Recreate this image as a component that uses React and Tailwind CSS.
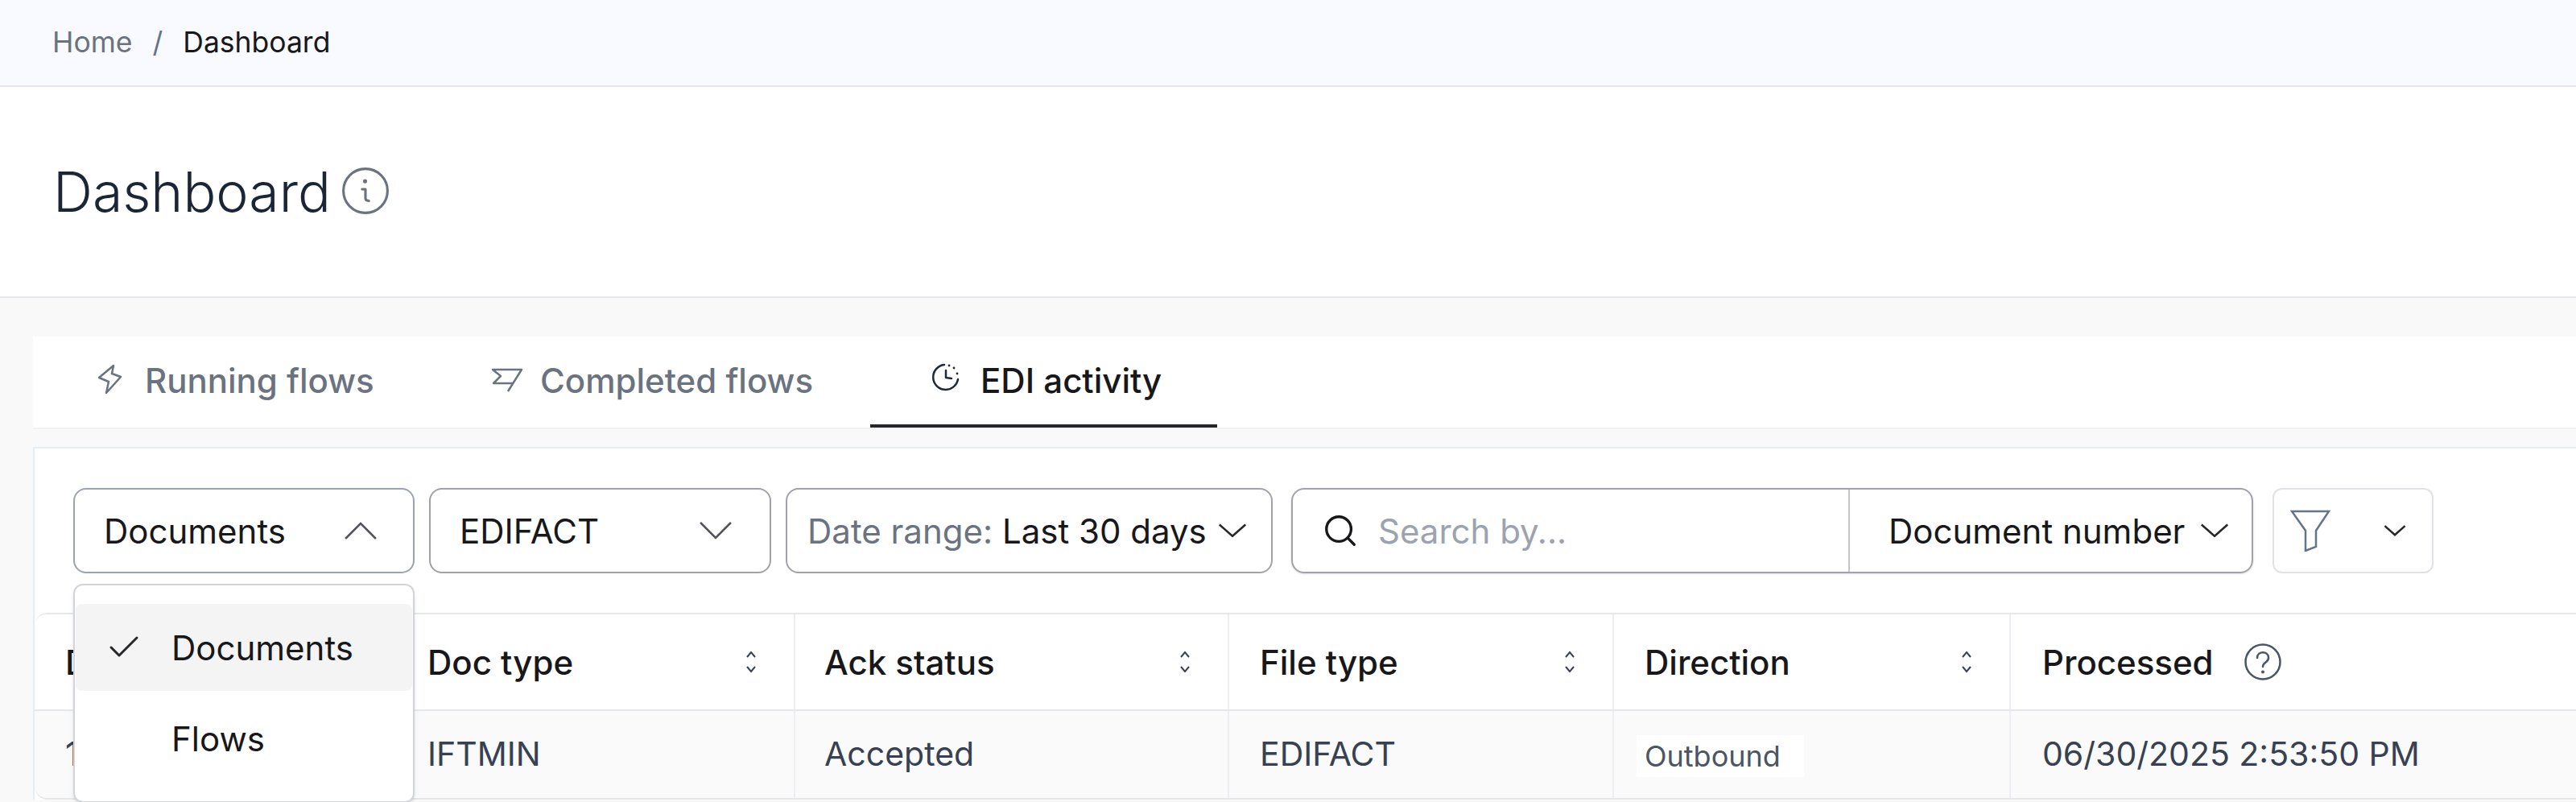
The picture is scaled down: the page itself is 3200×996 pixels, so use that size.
import { Search, Check } from "lucide-react";

const COLUMNS = [
  { label: "Document", value: "123456789", width: "w-[452px]", pad: "pl-[38px]" },
  { label: "Doc type", value: "IFTMIN", width: "w-[493px]", pad: "pl-[36px]" },
  { label: "Ack status", value: "Accepted", width: "w-[539px]", pad: "pl-[36px]" },
  { label: "File type", value: "EDIFACT", width: "w-[478px]", pad: "pl-[38px]" },
  { label: "Direction", value: "Outbound", width: "w-[493px]", pad: "pl-[38px]", badge: true },
];

function Chevron({ up, className }) {
  return (
    <svg viewBox="0 0 40 24" fill="none" preserveAspectRatio="none" className={className}>
      <polyline
        points={up ? "2,22 20,3 38,22" : "2,2 20,21 38,2"}
        stroke="currentColor"
        strokeWidth="2.5"
        vectorEffect="non-scaling-stroke"
      />
    </svg>
  );
}

function SortIcon() {
  return (
    <svg viewBox="0 0 16 30" fill="none" className="w-[16px] h-[30px] text-[#374151]">
      <polyline points="3,9 8,3 13,9" stroke="currentColor" strokeWidth="2" />
      <polyline points="3,21 8,27 13,21" stroke="currentColor" strokeWidth="2" />
    </svg>
  );
}

function BoltIcon() {
  return (
    <svg viewBox="0 0 70 70" fill="none" className="w-[70px] h-[70px] -mt-[14px] text-[#6b7280]">
      <path d="M41 23 L23 38 L35 43 L32 57 L50 37 L39 33 Z" stroke="currentColor" strokeWidth="2.5" strokeLinejoin="round" />
    </svg>
  );
}

function FlagIcon() {
  return (
    <svg viewBox="0 0 70 70" fill="none" className="w-[70px] h-[70px] -mt-[14px] text-[#6b7280]">
      <path d="M36 55 L53 28 L17 28 L27 36 L18 45 L43 45" stroke="currentColor" strokeWidth="2.5" strokeLinejoin="round" />
    </svg>
  );
}

function ClockIcon() {
  return (
    <svg viewBox="0 0 70 70" fill="none" className="w-[70px] h-[70px] -mt-[14px] text-[#1f2937]">
      <path d="M33 22 A15.5 15.5 0 1 0 50 40" stroke="currentColor" strokeWidth="2.5" strokeLinecap="round" />
      <path d="M35 29 V38 L42 39" stroke="currentColor" strokeWidth="2.5" strokeLinecap="round" strokeLinejoin="round" />
      <circle cx="39" cy="23" r="1.4" fill="currentColor" />
      <circle cx="45" cy="26" r="1.4" fill="currentColor" />
      <circle cx="49" cy="33" r="1.4" fill="currentColor" />
    </svg>
  );
}

function InfoIcon() {
  return (
    <svg viewBox="0 0 58 58" fill="none" className="w-[60px] h-[60px] -mt-[2px] text-[#6b7280] shrink-0">
      <circle cx="29" cy="29" r="26.5" stroke="currentColor" strokeWidth="3" />
      <circle cx="28.5" cy="17.5" r="2.5" fill="currentColor" />
      <path d="M25 27 H29 V38 Q29 41 33 41" stroke="currentColor" strokeWidth="3" strokeLinecap="round" strokeLinejoin="round" />
    </svg>
  );
}

function HelpIcon() {
  return (
    <svg viewBox="0 0 48 48" fill="none" className="w-[48px] h-[48px] text-[#4b5563] shrink-0">
      <circle cx="24" cy="24" r="21.5" stroke="currentColor" strokeWidth="2.5" />
      <path d="M17 19 C17 10 31 10 31 19 C31 25 24 24 24 30" stroke="currentColor" strokeWidth="2.5" strokeLinecap="round" />
      <circle cx="24" cy="36.5" r="2" fill="currentColor" />
    </svg>
  );
}

function FunnelIcon() {
  return (
    <svg viewBox="0 0 50 52" fill="none" className="w-[50px] h-[52px] text-[#64748b]">
      <path d="M2 2 H48 L32 26 V46 L19 51 V26 Z" stroke="currentColor" strokeWidth="2.5" />
    </svg>
  );
}

function Tab({ icon, label, active, className, labelClass }) {
  return (
    <div
      className={`flex items-center h-full border-b-4 ${active ? "border-[#27272a] text-[#18181b]" : "border-transparent text-[#6b7280]"} ${className}`}
    >
      {icon}
      <span className={`text-[42px] font-medium leading-none whitespace-nowrap ${labelClass}`}>{label}</span>
    </div>
  );
}

export default function App() {
  return (
    <div className="w-full h-[996px] overflow-hidden bg-[#f9f9fa] font-['Inter',sans-serif]">
      {/* Breadcrumb */}
      <div className="h-[108px] border-b-2 border-[#e5e7eb] bg-[#f9faff] pl-[65px] flex items-center text-[35.5px]">
        <span className="text-[#6b7280]">Home</span>
        <span className="text-[#64748b] mx-[25px]">/</span>
        <span className="text-[#18181b]">Dashboard</span>
      </div>

      {/* Page title */}
      <div className="h-[262px] bg-white border-b-2 border-[#e5e7eb] pl-[66px] flex items-center gap-[13px]">
        <h1 className="text-[68px] font-light text-[#1a2536] leading-none">Dashboard</h1>
        <InfoIcon />
      </div>

      <div className="pl-[41px] pt-[48px]">
        {/* Tabs */}
        <div className="h-[115px] bg-white border-b-2 border-[#f1f2f4] flex items-stretch">
          <Tab icon={<BoltIcon />} label="Running flows" className="ml-[59px] w-[495px]" labelClass="ml-[10px]" />
          <Tab icon={<FlagIcon />} label="Completed flows" className="w-[486px]" labelClass="ml-[6px]" />
          <Tab icon={<ClockIcon />} label="EDI activity" active className="w-[431px] pl-[59px]" labelClass="ml-[8px]" />
        </div>

        <div className="mt-[22px] bg-white border-t-2 border-l-2 border-[#e5edf5]">
          {/* Filters */}
          <div className="flex items-center pl-[48px] pt-[49px] text-[42px] text-[#18181b]">
            <div className="relative mr-[18px]">
              <div className="w-[424px] h-[106px] rounded-[16px] border-2 border-[#9ca3af] flex items-center justify-between pl-[36px] pr-[44px]">
                <span>Documents</span>
                <Chevron up className="w-[42px] h-[24px] text-[#52525b]" />
              </div>
              {/* Dropdown menu */}
              <div className="absolute z-10 left-0 top-[119px] w-[424px] h-[272px] bg-white rounded-[12px] border-2 border-[#d1d5db] shadow-md pt-[23px]">
                <div className="mx-[1px] h-[108px] rounded-[8px] bg-[#f4f4f5] flex items-center pl-[36px]">
                  <Check className="w-[48px] h-[48px] text-[#27272a]" strokeWidth={1.5} />
                  <span className="ml-[35px]">Documents</span>
                </div>
                <div className="h-[118px] flex items-center pl-[120px]">Flows</div>
              </div>
            </div>

            <div className="w-[425px] h-[106px] rounded-[16px] border-2 border-[#a1a1aa] flex items-center justify-between pl-[36px] pr-[46px] mr-[18px]">
              <span>EDIFACT</span>
              <Chevron className="w-[42px] h-[24px] text-[#52525b]" />
            </div>

            <div className="w-[605px] h-[106px] rounded-[16px] border-2 border-[#a1a1aa] flex items-center justify-between pl-[25px] pr-[30px] mr-[23px]">
              <span className="whitespace-nowrap">
                <span className="text-[#6b7280]">Date range: </span>Last 30 days
              </span>
              <Chevron className="w-[36px] h-[18px] text-[#27272a]" />
            </div>

            <div className="w-[1195px] h-[106px] rounded-[16px] border-2 border-[#a1a1aa] shadow-sm flex items-stretch mr-[24px]">
              <div className="w-[692px] flex items-center pl-[36px] border-r-2 border-[#c4c6cc]">
                <Search className="w-[46px] h-[46px] text-[#18181b] shrink-0" strokeWidth={1.75} />
                <input
                  readOnly
                  placeholder="Search by..."
                  className="ml-[24px] w-[500px] outline-none bg-transparent placeholder:text-[#9ca3af]"
                />
              </div>
              <div className="flex-1 flex items-center justify-between pl-[48px] pr-[28px]">
                <span className="whitespace-nowrap">Document number</span>
                <Chevron className="w-[36px] h-[18px] text-[#27272a]" />
              </div>
            </div>

            <div className="w-[200px] h-[106px] rounded-[12px] border-2 border-[#e0e2e6] flex items-center justify-between pl-[20px] pr-[32px]">
              <FunnelIcon />
              <Chevron className="w-[28px] h-[14px] text-[#27272a]" />
            </div>
          </div>

          {/* Table */}
          <div className="mt-[49px] border-t-2 border-[#e5e7eb] rounded-tl-[16px] overflow-hidden">
            <div className="h-[118px] flex bg-white font-medium text-[42px] text-[#18181b]">
              {COLUMNS.map((col) => (
                <div
                  key={col.label}
                  className={`${col.width} ${col.pad} flex items-center justify-between pr-[45px] border-r-2 border-[#eceef1]`}
                >
                  <span>{col.label}</span>
                  <SortIcon />
                </div>
              ))}
              <div className="flex-1 flex items-center pl-[39px] gap-[37px]">
                <span>Processed</span>
                <HelpIcon />
              </div>
            </div>
            <div className="h-[112px] flex bg-[#fafafa] border-t-2 border-b-2 border-[#e5e7eb] rounded-bl-[16px] text-[41px] text-[#374151]">
              {COLUMNS.map((col) => (
                <div key={col.label} className={`${col.width} ${col.pad} flex items-center border-r-2 border-[#eceef1]`}>
                  {col.badge ? (
                    <span className="-ml-[10px] mt-[4px] w-[208px] h-[52px] bg-white flex items-center pl-[10px] text-[36px] text-[#4b5563]">
                      {col.value}
                    </span>
                  ) : (
                    col.value
                  )}
                </div>
              ))}
              <div className="flex-1 flex items-center pl-[39px]">06/30/2025 2:53:50 PM</div>
            </div>
          </div>
        </div>
      </div>
    </div>
  );
}
